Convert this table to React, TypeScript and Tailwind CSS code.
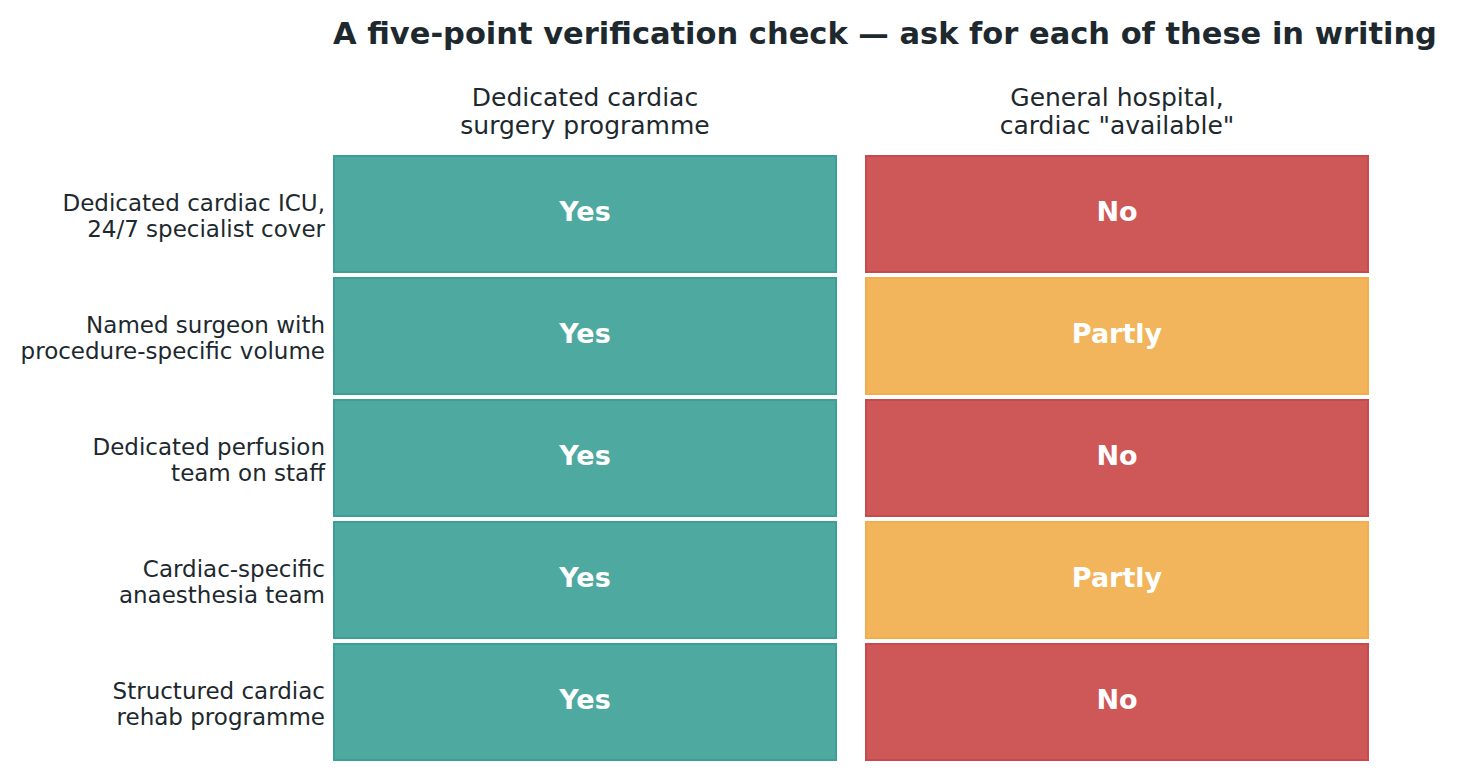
const rows = [
  { label: ["Dedicated cardiac ICU,", "24/7 specialist cover"], general: "No" },
  { label: ["Named surgeon with", "procedure-specific volume"], general: "Partly" },
  { label: ["Dedicated perfusion", "team on staff"], general: "No" },
  { label: ["Cardiac-specific", "anaesthesia team"], general: "Partly" },
  { label: ["Structured cardiac", "rehab programme"], general: "No" },
];

const cellStyles: Record<string, string> = {
  Yes: "bg-[#4ea9a0] border-[#3c9e94]",
  No: "bg-[#ce5858] border-[#c84a4c]",
  Partly: "bg-[#f2b55b] border-[#f2ae4c]",
};

function Cell({ value, className = "" }: { value: string; className?: string }) {
  return (
    <div
      className={`h-[118px] w-[504px] border-2 pb-[4px] flex items-center justify-center text-white font-bold text-[27px] ${cellStyles[value]} ${className}`}
    >
      {value}
    </div>
  );
}

export default function App() {
  return (
    <div
      className="w-[1459px] h-[779px] bg-white text-[#1d292e] overflow-hidden"
      style={{ fontFamily: '"DejaVu Sans", "Liberation Sans", sans-serif' }}
    >
      {/* Title */}
      <h1 className="pl-[333px] pt-[15px] text-[30.5px] font-bold leading-[38px] whitespace-nowrap">
        A five-point verification check — ask for each of these in writing
      </h1>

      {/* Column headers */}
      <div className="grid grid-cols-[333px_504px_532px] mt-[31px]">
        <div />
        <div className="text-center text-[25px] leading-[28px]">
          Dedicated cardiac
          <br />
          surgery programme
        </div>
        <div className="ml-[28px] text-center text-[25px] leading-[28px]">
          General hospital,
          <br />
          cardiac "available"
        </div>
      </div>

      {/* Matrix */}
      <div className="grid grid-cols-[333px_504px_532px] gap-y-[4px] mt-[15px]">
        {rows.map((row) => (
          <div key={row.label[0]} className="contents">
            <div className="flex flex-col items-end justify-center pt-[4px] pr-[8px] text-[23px] leading-[26px] text-right whitespace-nowrap">
              <span>{row.label[0]}</span>
              <span>{row.label[1]}</span>
            </div>
            <Cell value="Yes" />
            <Cell value={row.general} className="ml-[28px]" />
          </div>
        ))}
      </div>
    </div>
  );
}
